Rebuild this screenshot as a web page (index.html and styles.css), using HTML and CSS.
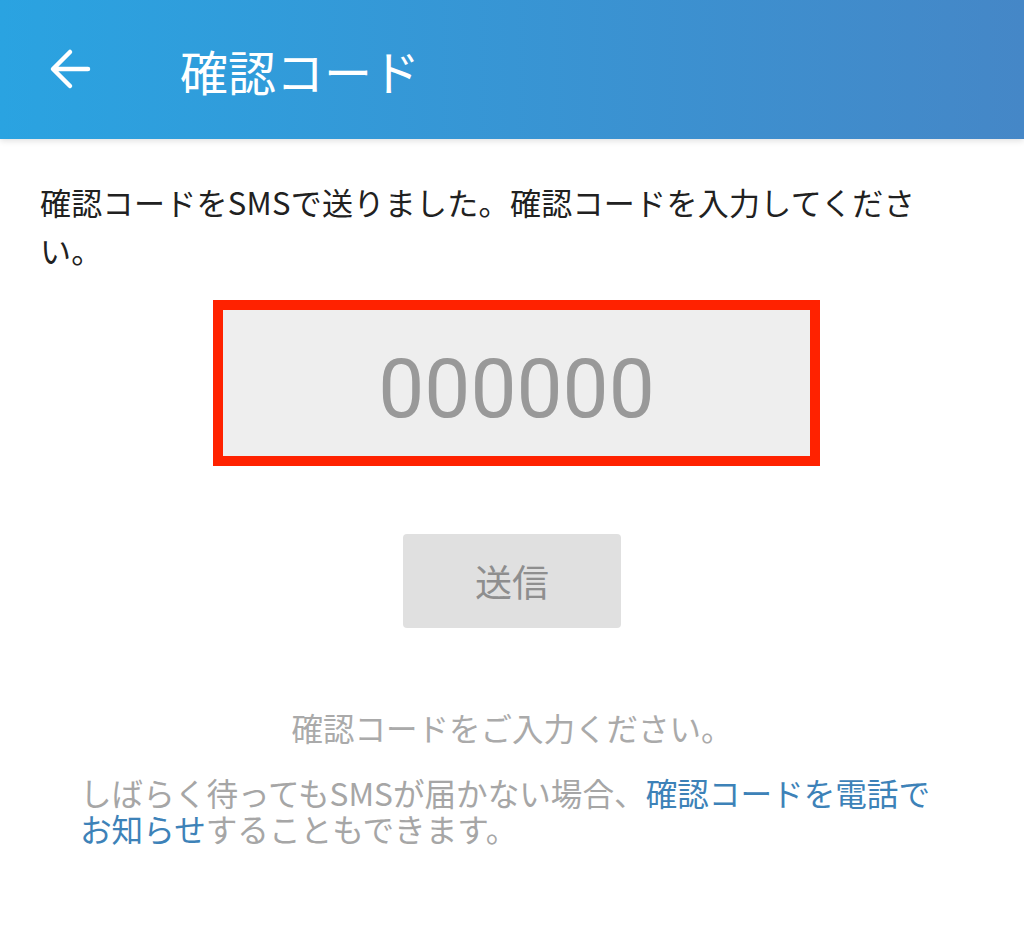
FILE: index.html
```html
<!DOCTYPE html>
<html lang="ja">
<head>
    <meta charset="UTF-8">
    <title>確認コード</title>
    <link rel="stylesheet" href="styles.css">
</head>
<body>
    <div class="appbar">
        <svg class="back" width="44" height="44" viewBox="0 0 44 44">
            <path d="M40 22H6M22 5L5 22l17 17" fill="none" stroke="#fff" stroke-width="4.5" stroke-linecap="round" stroke-linejoin="round"/>
        </svg>
        <h1 class="title">確認コード</h1>
    </div>

    <div class="content">
        <p class="lead">確認コードをSMSで送りました。確認コードを入力してください。</p>

        <div class="code-box">
            <input class="code" type="text" placeholder="000000">
        </div>

        <button class="send">送信</button>

        <p class="hint">確認コードをご入力ください。</p>
        <p class="note">しばらく待ってもSMSが届かない場合、<a href="#">確認コードを電話でお知らせ</a>することもできます。</p>
    </div>
</body>
</html>
```

FILE: styles.css
```css
body {
    margin: 0;
    font-family: "Noto Sans CJK JP", "Noto Sans", sans-serif;
    background: #fff;
    color: #212121;
}

.appbar {
    height: 139px;
    display: flex;
    align-items: center;
    padding-left: 48px;
    background: linear-gradient(to right, #2aa3e1, #4587c7);
    box-shadow: 0 2px 6px rgba(0, 0, 0, 0.12);
}

.back {
    margin-top: -2px;
}

.title {
    margin: 0 0 0 88px;
    font-size: 48px;
    font-weight: normal;
    color: #fff;
}

.content {
    padding: 0 40px;
}

.lead {
    width: 900px;
    margin: 39px 0 0;
    font-size: 31px;
    line-height: 48px;
    letter-spacing: 0.3px;
}

.code-box {
    width: 587px;
    height: 146px;
    margin: 26px 0 0 173px;
    border: 10px solid #ff2200;
    background: #eeeeee;
    display: flex;
}

.code {
    width: 100%;
    min-width: 0;
    border: none;
    background: transparent;
    text-align: center;
    font-family: Roboto, sans-serif;
    font-size: 82px;
    color: #999;
    outline: none;
    padding: 12px 0 0;
}

.code::placeholder {
    color: #999;
}

.send {
    display: block;
    width: 218px;
    height: 94px;
    margin: 68px auto 0;
    border: none;
    border-radius: 4px;
    background: #e0e0e0;
    color: #8e8e8e;
    font-family: "Noto Sans CJK JP", sans-serif;
    font-size: 37px;
}

.hint {
    margin: 76px 0 0;
    text-align: center;
    font-size: 31.5px;
    color: #aaaaaa;
}

.note {
    margin: 24px 0 0 40px;
    width: 860px;
    font-size: 31.6px;
    line-height: 36px;
    color: #a6a6a6;
}

.note a {
    color: #3d82b8;
    text-decoration: none;
}
```
